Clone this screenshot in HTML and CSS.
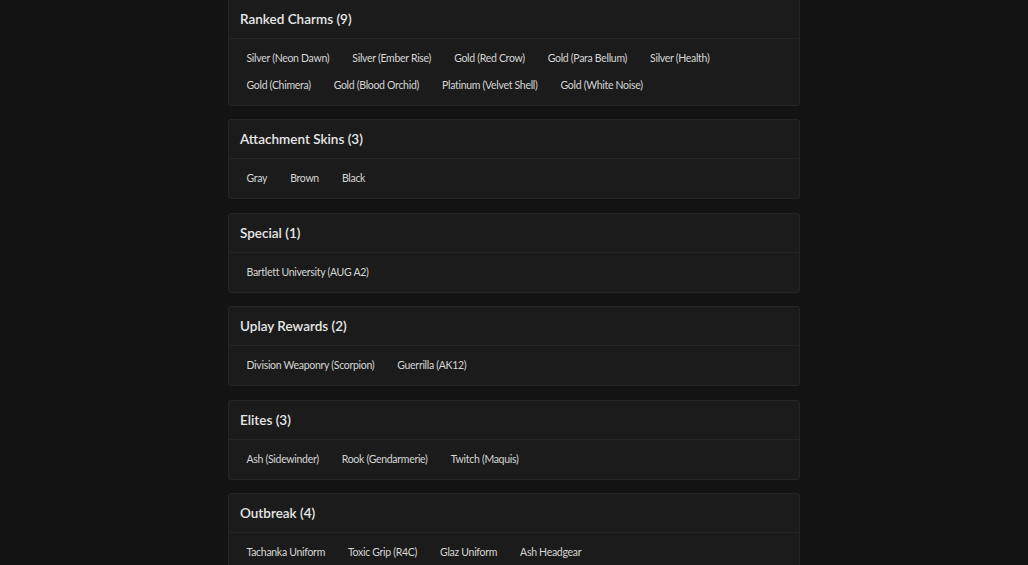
FILE: index.html
```html
<!DOCTYPE html>
<html lang="en">
<head>
<meta charset="utf-8">
<title>Collection</title>
<link rel="stylesheet" href="styles.css">
</head>
<body>
<main class="list">
  <section class="card">
    <h2 class="card-title">Ranked Charms (9)</h2>
    <div class="card-body">
      <span class="item">Silver (Neon Dawn)</span>
      <span class="item">Silver (Ember Rise)</span>
      <span class="item">Gold (Red Crow)</span>
      <span class="item">Gold (Para Bellum)</span>
      <span class="item">Silver (Health)</span>
      <span class="item">Gold (Chimera)</span>
      <span class="item">Gold (Blood Orchid)</span>
      <span class="item">Platinum (Velvet Shell)</span>
      <span class="item">Gold (White Noise)</span>
    </div>
  </section>
  <section class="card">
    <h2 class="card-title">Attachment Skins (3)</h2>
    <div class="card-body">
      <span class="item">Gray</span>
      <span class="item">Brown</span>
      <span class="item">Black</span>
    </div>
  </section>
  <section class="card">
    <h2 class="card-title">Special (1)</h2>
    <div class="card-body">
      <span class="item">Bartlett University (AUG A2)</span>
    </div>
  </section>
  <section class="card">
    <h2 class="card-title">Uplay Rewards (2)</h2>
    <div class="card-body">
      <span class="item">Division Weaponry (Scorpion)</span>
      <span class="item">Guerrilla (AK12)</span>
    </div>
  </section>
  <section class="card">
    <h2 class="card-title">Elites (3)</h2>
    <div class="card-body">
      <span class="item">Ash (Sidewinder)</span>
      <span class="item">Rook (Gendarmerie)</span>
      <span class="item">Twitch (Maquis)</span>
    </div>
  </section>
  <section class="card">
    <h2 class="card-title">Outbreak (4)</h2>
    <div class="card-body">
      <span class="item">Tachanka Uniform</span>
      <span class="item">Toxic Grip (R4C)</span>
      <span class="item">Glaz Uniform</span>
      <span class="item">Ash Headgear</span>
    </div>
  </section>
</main>
</body>
</html>
```
FILE: styles.css
```css
html, body {
  margin: 0;
  padding: 0;
  background: #131313;
}
body {
  font-family: Lato, "Open Sans", sans-serif;
  color: #e4e4e4;
  overflow: hidden;
}
.list {
  width: 572px;
  margin: -1.5px auto 0;
  display: flex;
  flex-direction: column;
  gap: 13.5px;
}
.card {
  background: #1b1b1b;
  border: 1px solid #252525;
  border-radius: 3px;
}
.card-title {
  margin: 0;
  padding: 0 11px;
  height: 38px;
  line-height: 38px;
  font-size: 13.5px;
  font-weight: 600;
  letter-spacing: 0;
  color: #e8e8e8;
  border-bottom: 1px solid #252525;
}
.card-body {
  padding: 6px 6px;
  display: flex;
  flex-wrap: wrap;
}
.item {
  display: block;
  padding: 6px 11.5px;
  line-height: 15px;
  font-size: 10.5px;
  letter-spacing: -0.3px;
  color: #d6d6d6;
}
```
